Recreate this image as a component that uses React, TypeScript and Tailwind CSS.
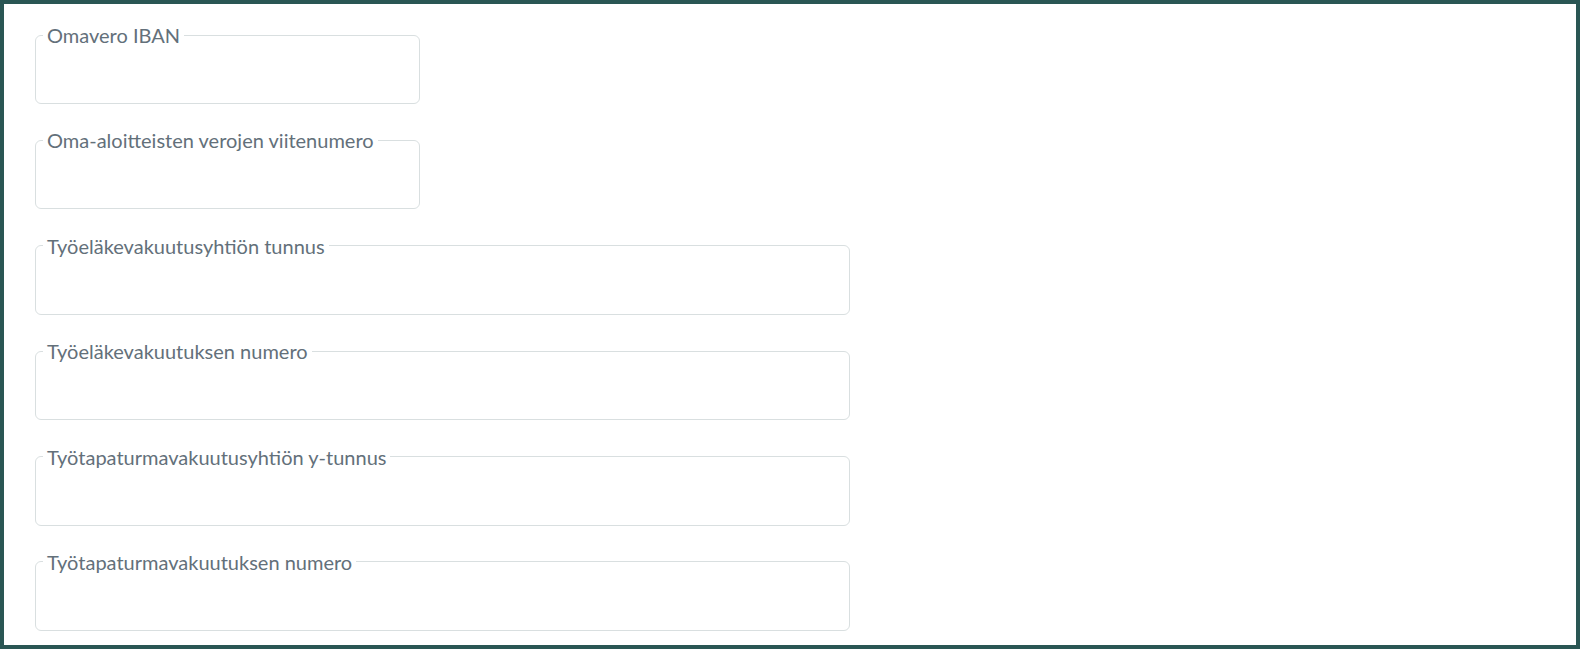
import React from "react";

const fields: { label: string; wide: boolean }[] = [
  { label: "Omavero IBAN", wide: false },
  { label: "Oma-aloitteisten verojen viitenumero", wide: false },
  { label: "Työeläkevakuutusyhtiön tunnus", wide: true },
  { label: "Työeläkevakuutuksen numero", wide: true },
  { label: "Työtapaturmavakuutusyhtiön y-tunnus", wide: true },
  { label: "Työtapaturmavakuutuksen numero", wide: true },
];

export default function App() {
  return (
    <div
      className="w-[1580px] h-[649px] border-4 border-[#2a5654] bg-white overflow-hidden pl-[31px] pt-[17px] flex flex-col gap-[22.4px]"
      style={{ fontFamily: "Lato, 'Noto Sans', sans-serif" }}
    >
      {fields.map((f) => (
        <fieldset
          key={f.label}
          className={`${f.wide ? "w-[815px]" : "w-[385px]"} h-[83px] shrink-0 border border-[#d9dfe0] rounded-[6px] px-[7px]`}
        >
          <legend className="px-[4px] text-[20px] leading-[28px] text-[#63707a]">{f.label}</legend>
        </fieldset>
      ))}
    </div>
  );
}
